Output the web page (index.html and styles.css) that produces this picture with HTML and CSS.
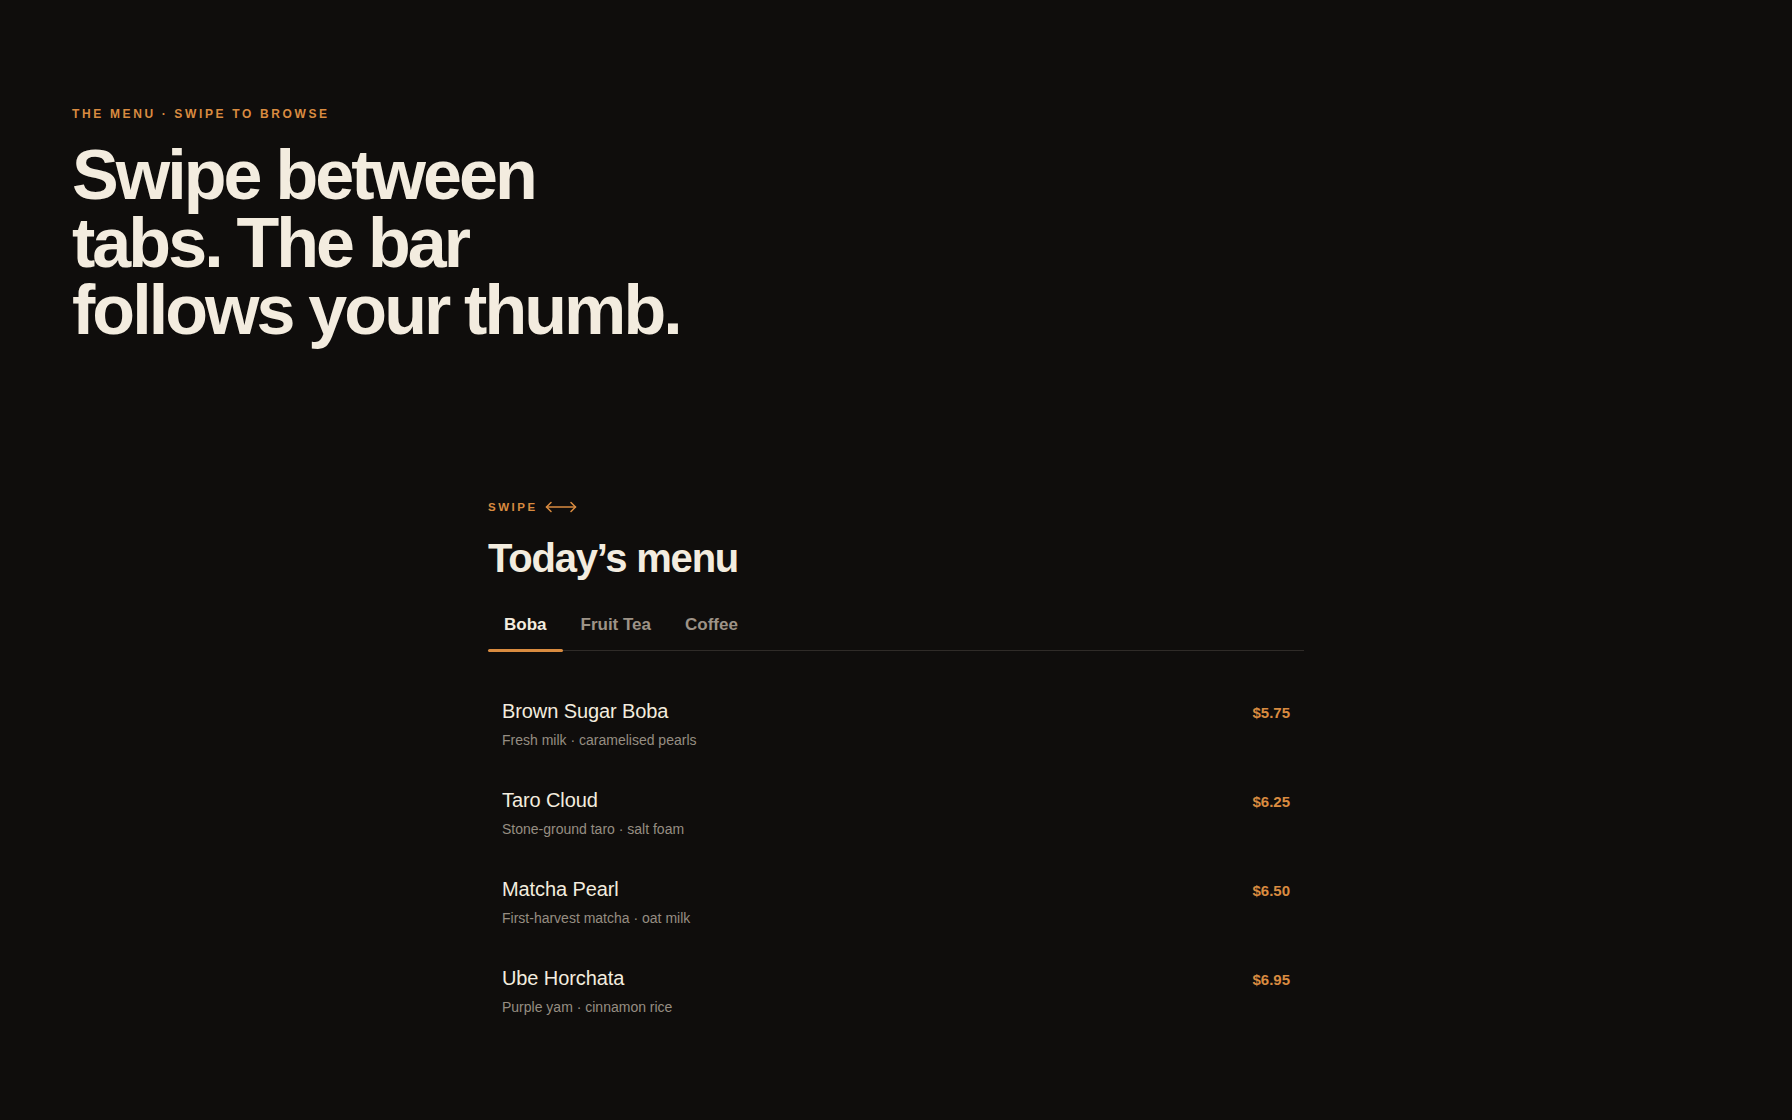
FILE: index.html
```html
<!DOCTYPE html>
<html lang="en">
<head>
<meta charset="utf-8">
<title>Today's menu</title>
<link rel="stylesheet" href="styles.css">
</head>
<body>
<header class="hero">
  <p class="eyebrow">The menu · Swipe to browse</p>
  <h1 class="headline">Swipe between<br>tabs. The bar<br>follows your thumb.</h1>
</header>

<section class="menu">
  <div class="swipe-hint">
    <span class="eyebrow eyebrow-small">Swipe</span>
    <svg class="arrow" width="32" height="12" viewBox="0 0 32 12" fill="none" stroke="currentColor" stroke-width="1.5" stroke-linecap="round" stroke-linejoin="round">
      <path d="M1.5 6h29"/>
      <path d="M6 1.5L1.5 6 6 10.5"/>
      <path d="M26 1.5L30.5 6 26 10.5"/>
    </svg>
  </div>
  <h2 class="menu-title">Today’s menu</h2>

  <nav class="tabs">
    <button class="tab is-active">Boba</button>
    <button class="tab">Fruit Tea</button>
    <button class="tab">Coffee</button>
  </nav>

  <ul class="items">
    <li class="item">
      <div class="item-text">
        <span class="item-name">Brown Sugar Boba</span>
        <span class="item-desc">Fresh milk · caramelised pearls</span>
      </div>
      <span class="item-price">$5.75</span>
    </li>
    <li class="item">
      <div class="item-text">
        <span class="item-name">Taro Cloud</span>
        <span class="item-desc">Stone-ground taro · salt foam</span>
      </div>
      <span class="item-price">$6.25</span>
    </li>
    <li class="item">
      <div class="item-text">
        <span class="item-name">Matcha Pearl</span>
        <span class="item-desc">First-harvest matcha · oat milk</span>
      </div>
      <span class="item-price">$6.50</span>
    </li>
    <li class="item">
      <div class="item-text">
        <span class="item-name">Ube Horchata</span>
        <span class="item-desc">Purple yam · cinnamon rice</span>
      </div>
      <span class="item-price">$6.95</span>
    </li>
  </ul>
</section>
</body>
</html>
```
FILE: styles.css
```css
* { box-sizing: border-box; }

html, body {
  margin: 0;
  padding: 0;
  background: #0f0d0c;
  color: #f3ecdf;
  font-family: "Liberation Sans", Arial, Helvetica, sans-serif;
  min-height: 100%;
}

body {
  min-height: 1120px;
}

.hero {
  padding: 106px 72px 0;
}

.eyebrow {
  margin: 0;
  font-size: 12px;
  line-height: 16px;
  font-weight: 700;
  letter-spacing: 0.22em;
  text-transform: uppercase;
  color: #d98b40;
}

.eyebrow-small {
  font-size: 11.5px;
  letter-spacing: 0.22em;
}

.headline {
  margin: 20px 0 0;
  font-size: 70px;
  line-height: 67.5px;
  font-weight: 700;
  letter-spacing: -0.042em;
  word-spacing: -0.01em;
  color: #f3ecdf;
}

.menu {
  width: 816px;
  margin: 154px auto 0;
}

.swipe-hint {
  display: flex;
  align-items: center;
  gap: 7px;
  color: #d98b40;
}

.arrow {
  display: block;
}

.menu-title {
  margin: 21px 0 0;
  font-size: 40px;
  line-height: 44px;
  font-weight: 700;
  letter-spacing: -0.03em;
  color: #f3ecdf;
}

.tabs {
  display: flex;
  gap: 2px;
  margin-top: 23px;
  border-bottom: 1px solid #2f2b28;
}

.tab {
  position: relative;
  background: none;
  border: 0;
  padding: 12px 16px 15px;
  font-family: inherit;
  font-size: 17px;
  line-height: 20px;
  font-weight: 700;
  color: #9d9387;
  cursor: pointer;
}

.tab.is-active {
  color: #f3ecdf;
}

.tab.is-active::after {
  content: "";
  position: absolute;
  left: 0;
  right: 0;
  bottom: -2px;
  height: 3px;
  border-radius: 2px;
  background: #d98b40;
}

.items {
  list-style: none;
  margin: 28px 0 0;
  padding: 0;
}

.item {
  display: flex;
  justify-content: space-between;
  align-items: baseline;
  padding: 19px 14px 18px;
}

.item-text {
  display: flex;
  flex-direction: column;
  gap: 6px;
}

.item-name {
  font-size: 20px;
  line-height: 26px;
  color: #f3ecdf;
  letter-spacing: -0.005em;
}

.item-desc {
  font-size: 14px;
  line-height: 20px;
  color: #968d82;
}

.item-price {
  font-size: 15px;
  line-height: 26px;
  font-weight: 700;
  color: #d98b40;
}
```
